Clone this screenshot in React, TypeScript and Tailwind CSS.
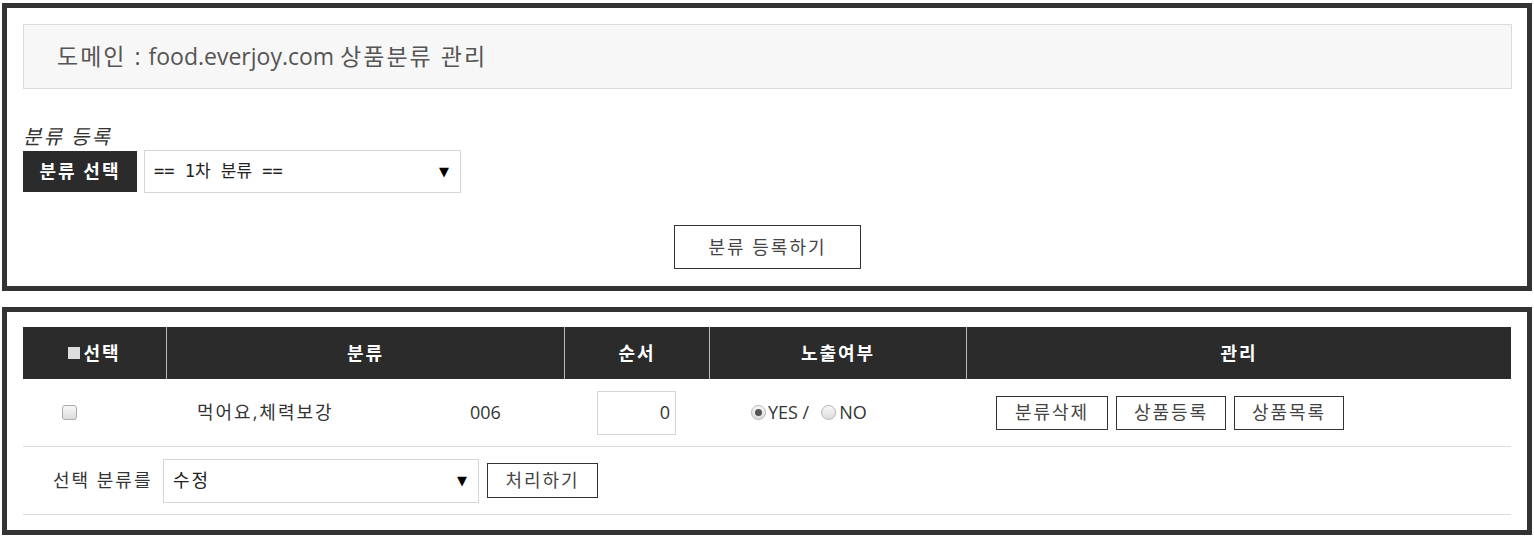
import React from 'react';

const font = { fontFamily: '"Open Sans", "Noto Sans CJK KR", sans-serif' };

function CheckBox() {
  return (
    <span className="inline-block w-[15px] h-[15px] rounded-[3px] border border-[#a9a9a9] bg-gradient-to-b from-[#f8f8f8] to-[#dcdcdc]" />
  );
}

function Radio({ checked }: { checked?: boolean }) {
  return (
    <span className="inline-flex items-center justify-center w-[15px] h-[15px] rounded-full border border-[#b5b5b5] bg-gradient-to-b from-[#f8f8f8] to-[#dcdcdc]">
      {checked && <span className="w-[7px] h-[7px] rounded-full bg-[#555]" />}
    </span>
  );
}

function FakeSelect({ value, className }: { value: string; className: string }) {
  return (
    <div className={`flex items-center justify-between border border-[#d5d5d5] bg-white pl-[9px] pr-[11px] text-[#222] ${className}`}>
      <span>{value}</span>
      <span className="text-[13px] text-black tracking-normal [font-family:'DejaVu_Sans',sans-serif]">▼</span>
    </div>
  );
}

function OutlineButton({ label, className }: { label: string; className: string }) {
  return (
    <button className={`border border-[#333] bg-white text-[#444] flex items-center justify-center tracking-[2px] ${className}`}>
      {label}
    </button>
  );
}

export default function App() {
  return (
    <div className="bg-white w-[1534px] h-[539px] pt-[3px] px-[2px]" style={font}>
      {/* Category register */}
      <section className="border-[5px] border-[#333] h-[288px] pt-[16px] pl-[16px] pr-[15px]">
        <div className="h-[65px] bg-[#f7f7f7] border border-[#dcdcdc] flex items-center pl-[33px] text-[23px] text-[#555]">
          <span className="tracking-[2px]">도메인 :</span>
          <span className="ml-[6px]">food.everjoy.com</span>
          <span className="ml-[6px] tracking-[2px]">상품분류 관리</span>
        </div>

        <div className="mt-[35px] text-[20px] italic text-[#333] leading-[25px] tracking-[2px]">분류 등록</div>
        <div className="flex items-center gap-[7px] mt-[1px]">
          <div className="w-[114px] h-[41px] bg-[#2b2b2b] text-white font-bold text-[18px] tracking-[2px] flex items-center justify-center">
            분류 선택
          </div>
          <FakeSelect
            value="== 1차 분류 =="
            className="w-[317px] h-[43px] text-[17px] [font-family:'DejaVu_Sans_Mono','Noto_Sans_CJK_KR',monospace]"
          />
        </div>

        <div className="flex justify-center mt-[32px]">
          <OutlineButton label="분류 등록하기" className="w-[187px] h-[44px] text-[18px]" />
        </div>
      </section>

      {/* Category list */}
      <section className="border-[5px] border-[#333] h-[228px] mt-[16px] pt-[15px] px-[16px]">
        <div className="grid grid-cols-[143px_398px_145px_257px_1fr] h-[52px] bg-[#2b2b2b] text-white font-bold text-[18px] tracking-[2px]">
          <div className="flex items-center justify-center gap-[3px]">
            <span className="inline-block w-[12px] h-[12px] bg-[#ddd]" />
            선택
          </div>
          <div className="flex items-center justify-center border-l border-[#bbb]">분류</div>
          <div className="flex items-center justify-center border-l border-[#bbb]">순서</div>
          <div className="flex items-center justify-center border-l border-[#bbb]">노출여부</div>
          <div className="flex items-center justify-center border-l border-[#bbb]">관리</div>
        </div>

        <div className="grid grid-cols-[143px_398px_145px_257px_1fr] h-[68px] border-b border-[#dcdcdc] text-[18px] text-[#333]">
          <div className="flex items-center pl-[39px]">
            <CheckBox />
          </div>
          <div className="flex items-center pl-[31px]">
            <span className="w-[273px] tracking-[2px]">먹어요,체력보강</span>
            <span>006</span>
          </div>
          <div className="flex items-center justify-center">
            <div className="w-[79px] h-[44px] border border-[#d5d5d5] flex items-center justify-end pr-[5px]">0</div>
          </div>
          <div className="flex items-center pl-[42px]">
            <Radio checked />
            <span className="ml-[2px] mr-[12px]">YES /</span>
            <Radio />
            <span className="ml-[3px]">NO</span>
          </div>
          <div className="flex items-center pl-[30px] gap-[8px]">
            <OutlineButton label="분류삭제" className="w-[112px] h-[34px] text-[18px]" />
            <OutlineButton label="상품등록" className="w-[110px] h-[34px] text-[18px]" />
            <OutlineButton label="상품목록" className="w-[110px] h-[34px] text-[18px]" />
          </div>
        </div>

        <div className="flex items-center h-[68px] border-b border-[#dcdcdc] pl-[30px] text-[18px] text-[#333]">
          <span className="w-[110px] tracking-[2px]">선택 분류를</span>
          <FakeSelect value="수정" className="w-[316px] h-[44px] text-[18px] tracking-[2px]" />
          <OutlineButton label="처리하기" className="w-[111px] h-[35px] ml-[8px] text-[18px]" />
        </div>
      </section>
    </div>
  );
}
